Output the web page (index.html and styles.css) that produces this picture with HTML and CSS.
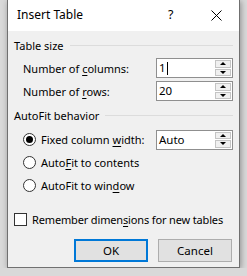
FILE: index.html
```html
<!DOCTYPE html>
<html lang="en">
  <head>
    <title>Insert Table</title>
    <meta charset="UTF-8" />
    <link rel="stylesheet" href="styles.css">
  </head>
  <body>
    <div class="dialog">
      <div class="title-bar">
        <div class="title">Insert Table</div>
        <div class="help">?</div>
        <div class="close">
          <svg width="11" height="11" viewBox="0 0 11 11">
            <path d="M0.5 0.5 L10.5 10.5 M10.5 0.5 L0.5 10.5" stroke="#000" stroke-width="1" fill="none" />
          </svg>
        </div>
      </div>

      <div class="content">
        <div class="group-label"><span>Table size</span><div class="rule"></div></div>

        <div class="field-row first">
          <div class="field-label">Number of <u>c</u>olumns:</div>
          <div class="spin">
            <div class="spin-value">1<span class="caret"></span></div>
            <div class="spin-buttons">
              <div class="spin-btn"><span class="arrow-up"></span></div>
              <div class="spin-btn"><span class="arrow-down"></span></div>
            </div>
          </div>
        </div>
        <div class="field-row">
          <div class="field-label">Number of <u>r</u>ows:</div>
          <div class="spin">
            <div class="spin-value">20</div>
            <div class="spin-buttons">
              <div class="spin-btn"><span class="arrow-up"></span></div>
              <div class="spin-btn"><span class="arrow-down"></span></div>
            </div>
          </div>
        </div>

        <div class="group-label second"><span>AutoFit behavior</span><div class="rule"></div></div>

        <div class="radio-row first">
          <div class="radio checked"></div>
          <div class="radio-label">Fixed column <u>w</u>idth:</div>
          <div class="spin">
            <div class="spin-value">Auto</div>
            <div class="spin-buttons">
              <div class="spin-btn"><span class="arrow-up"></span></div>
              <div class="spin-btn"><span class="arrow-down"></span></div>
            </div>
          </div>
        </div>
        <div class="radio-row">
          <div class="radio"></div>
          <div class="radio-label">Auto<u>F</u>it to contents</div>
        </div>
        <div class="radio-row">
          <div class="radio"></div>
          <div class="radio-label">AutoFit to win<u>d</u>ow</div>
        </div>

        <div class="check-row">
          <div class="checkbox"></div>
          <div class="check-label">Remember dimen<u>s</u>ions for new tables</div>
        </div>

        <div class="buttons">
          <button class="btn default">OK</button>
          <button class="btn">Cancel</button>
        </div>
      </div>
    </div>
  </body>
</html>
```

FILE: styles.css
```css
body {
  margin: 0;
  background-color: #d9d9d9;
  font-family: "Noto Sans", "Liberation Sans", sans-serif;
  font-size: 11px;
  color: #000;
}

.dialog {
  margin-left: 7px;
  width: 233px;
  height: 268px;
  box-sizing: border-box;
  border: 1px solid #707070;
  border-top: none;
  background-color: #f0f0f0;
  box-shadow: 1px 1px 6px rgba(0, 0, 0, 0.35);
  display: flex;
  flex-direction: column;
}

.title-bar {
  height: 31px;
  background-color: #fff;
  display: flex;
  align-items: center;
  flex-shrink: 0;
}

.title {
  padding-left: 9px;
  font-size: 12px;
  flex-grow: 1;
  margin-top: -2px;
}

.help {
  font-size: 12.5px;
  width: 43px;
  margin-top: -2px;
}

.close {
  width: 28px;
  display: flex;
  margin-top: -1px;
}

.content {
  padding: 6px 6px 0 6px;
  display: flex;
  flex-direction: column;
}

.group-label {
  display: flex;
  align-items: center;
  height: 16px;
}

.group-label span {
  white-space: nowrap;
  padding-right: 6px;
}

.group-label.second {
  margin-top: 6px;
}

.rule {
  flex-grow: 1;
  height: 1px;
  background-color: #dcdcdc;
}

.field-row {
  display: flex;
  align-items: center;
  justify-content: space-between;
  padding-left: 9px;
  margin-top: 3px;
  white-space: nowrap;
}

.field-row.first {
  margin-top: 5px;
}

.spin {
  width: 77px;
  height: 20px;
  box-sizing: border-box;
  border: 1px solid #8f8f8f;
  background-color: #fff;
  display: flex;
  flex-shrink: 0;
}

.spin-value {
  flex-grow: 1;
  padding-left: 2px;
  line-height: 18px;
  display: flex;
  align-items: center;
  font-size: 11.5px;
}

.caret {
  display: inline-block;
  width: 1px;
  height: 13px;
  background-color: #000;
  margin-left: 1px;
}

.spin-buttons {
  width: 16px;
  display: flex;
  flex-direction: column;
  padding: 1px 1px 1px 0;
  gap: 1px;
}

.spin-btn {
  flex-grow: 1;
  box-sizing: border-box;
  border: 1px solid #c4c4c4;
  background-color: #f0f0f0;
  display: flex;
  align-items: center;
  justify-content: center;
}

.arrow-up {
  width: 0;
  height: 0;
  border-left: 3px solid transparent;
  border-right: 3px solid transparent;
  border-bottom: 3px solid #000;
}

.arrow-down {
  width: 0;
  height: 0;
  border-left: 3px solid transparent;
  border-right: 3px solid transparent;
  border-top: 3px solid #000;
}

.radio-row {
  display: flex;
  align-items: center;
  height: 23px;
  padding-left: 9px;
  white-space: nowrap;
}

.radio-row.first {
  margin-top: 5px;
}

.radio {
  width: 13px;
  height: 13px;
  box-sizing: border-box;
  border: 1px solid #333;
  border-radius: 50%;
  background-color: #fff;
  display: flex;
  align-items: center;
  justify-content: center;
  flex-shrink: 0;
}

.radio.checked::after {
  content: "";
  width: 7px;
  height: 7px;
  border-radius: 50%;
  background-color: #000;
}

.radio-label {
  padding-left: 5px;
  flex-grow: 1;
}

.check-row {
  display: flex;
  align-items: center;
  height: 16px;
  margin-top: 14px;
  white-space: nowrap;
}

.checkbox {
  width: 13px;
  height: 13px;
  box-sizing: border-box;
  border: 1px solid #333;
  background-color: #fff;
  flex-shrink: 0;
}

.check-label {
  padding-left: 5px;
  letter-spacing: -0.15px;
}

.buttons {
  display: flex;
  justify-content: flex-end;
  gap: 10px;
  margin-top: 12px;
  padding-right: 1px;
}

.btn {
  width: 74px;
  height: 23px;
  box-sizing: border-box;
  border: 1px solid #adadad;
  background-color: #e1e1e1;
  font-family: inherit;
  font-size: 11.5px;
  color: #000;
  padding: 0;
}

.btn.default {
  border: 2px solid #0078d7;
}

u {
  text-decoration-thickness: 1px;
  text-underline-offset: 2px;
}
```
